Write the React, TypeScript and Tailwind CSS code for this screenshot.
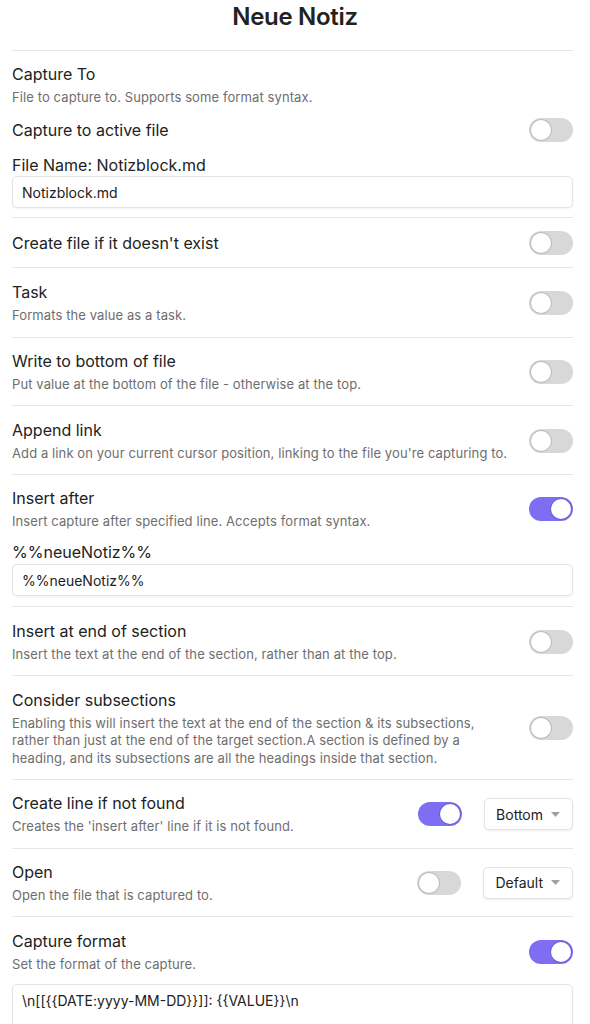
import React from 'react';

type Row = {
  name: string;
  desc?: string[];
  on?: boolean;
  select?: string;
};

function Toggle({ on }: { on?: boolean }) {
  return (
    <div
      className={`shrink-0 w-[44px] h-[24px] rounded-full p-[2px] flex items-center ${
        on ? 'bg-[#7f6df2] justify-end' : 'bg-[#d8d8d8] justify-start'
      }`}
    >
      <div className="w-[20px] h-[20px] rounded-full bg-white shadow-[0_0_0_1px_rgba(0,0,0,0.12)]" />
    </div>
  );
}

function Select({ value }: { value: string }) {
  return (
    <div className="shrink-0 h-[32px] flex items-center gap-[8px] pl-[11px] pr-[12px] rounded-[5px] bg-white border border-[#e3e3e3] shadow-[0_1px_2px_rgba(0,0,0,0.08)] text-[14px] text-[#222]">
      {value}
      <svg width="9" height="5" viewBox="0 0 9 5">
        <path d="M0 0h9L4.5 5z" fill="#a0a0a0" />
      </svg>
    </div>
  );
}

function TextInput({ value }: { value: string }) {
  return (
    <div className="h-[32px] flex items-center px-[9px] rounded-[5px] bg-white border border-[#e3e3e3] shadow-[0_1px_2px_rgba(0,0,0,0.05)] text-[14px] text-[#222]">
      {value}
    </div>
  );
}

function Setting({ name, desc, on, select }: Row) {
  return (
    <div className="flex items-center gap-4">
      <div className="flex-1 min-w-0">
        <div className="text-[16px] leading-[20px] text-[#222]">{name}</div>
        {desc ? (
          <div className="mt-[5px] text-[13px] leading-[17.5px] tracking-[0.1px] text-[#6e6e6e]">
            {desc.map((d) => (
              <div key={d}>{d}</div>
            ))}
          </div>
        ) : null}
      </div>
      <div className="flex items-center gap-[22px]">
        <Toggle on={on} />
        {select ? <Select value={select} /> : null}
      </div>
    </div>
  );
}

export default function App() {
  return (
    <div className="w-[590px] h-[1024px] overflow-hidden bg-white font-['Inter',sans-serif] text-[#222]">
      <div className="h-[50px] flex items-center justify-center text-[24px] font-semibold tracking-[-0.3px] pb-[16px]">
        Neue Notiz
      </div>
      <div className="ml-[12px] mr-[17px] divide-y divide-[#e6e6e6] border-t border-[#e6e6e6]">
        <div className="pt-[13px] pb-[9px] flex flex-col">
          <div className="text-[16px] leading-[20px]">Capture To</div>
          <div className="text-[13px] leading-[18px] tracking-[0.1px] text-[#6e6e6e] mt-[4px]">
            File to capture to. Supports some format syntax.
          </div>
          <div className="flex items-center justify-between mt-[12px]">
            <div className="text-[16px] leading-[20px]">Capture to active file</div>
            <Toggle />
          </div>
          <div className="text-[16px] leading-[20px] mt-[13px]">File Name: Notizblock.md</div>
          <div className="mt-[1px]">
            <TextInput value="Notizblock.md" />
          </div>
        </div>
        <div className="pt-[13px] pb-[12px]">
          <Setting name="Create file if it doesn't exist" />
        </div>
        <div className="pt-[14px] pb-[12px]">
          <Setting name="Task" desc={['Formats the value as a task.']} />
        </div>
        <div className="pt-[13px] pb-[12px]">
          <Setting
            name="Write to bottom of file"
            desc={['Put value at the bottom of the file - otherwise at the top.']}
          />
        </div>
        <div className="pt-[14px] pb-[11px]">
          <Setting
            name="Append link"
            desc={["Add a link on your current cursor position, linking to the file you're capturing to."]}
          />
        </div>
        <div className="pt-[13px] pb-[10px]">
          <Setting
            name="Insert after"
            on
            desc={['Insert capture after specified line. Accepts format syntax.']}
          />
          <div className="text-[16px] leading-[20px] mt-[12px]">%%neueNotiz%%</div>
          <div className="mt-[2px]">
            <TextInput value="%%neueNotiz%%" />
          </div>
        </div>
        <div className="pt-[14px] pb-[11px]">
          <Setting
            name="Insert at end of section"
            desc={['Insert the text at the end of the section, rather than at the top.']}
          />
        </div>
        <div className="pt-[14px] pb-[12px]">
          <Setting
            name="Consider subsections"
            desc={[
              'Enabling this will insert the text at the end of the section & its subsections,',
              'rather than just at the end of the target section.A section is defined by a',
              'heading, and its subsections are all the headings inside that section.',
            ]}
          />
        </div>
        <div className="pt-[13px] pb-[12px]">
          <Setting
            name="Create line if not found"
            on
            select="Bottom"
            desc={["Creates the 'insert after' line if it is not found."]}
          />
        </div>
        <div className="pt-[13px] pb-[12px]">
          <Setting name="Open" select="Default" desc={['Open the file that is captured to.']} />
        </div>
        <div className="pt-[14px]">
          <Setting name="Capture format" on desc={['Set the format of the capture.']} />
          <div className="mt-[10px] h-[80px] px-[9px] py-[6px] rounded-[5px] border border-[#e3e3e3] shadow-[0_1px_2px_rgba(0,0,0,0.05)] text-[14px] leading-[20px]">
            {'\\n[[{{DATE:yyyy-MM-DD}}]]: {{VALUE}}\\n'}
          </div>
        </div>
      </div>
    </div>
  );
}
